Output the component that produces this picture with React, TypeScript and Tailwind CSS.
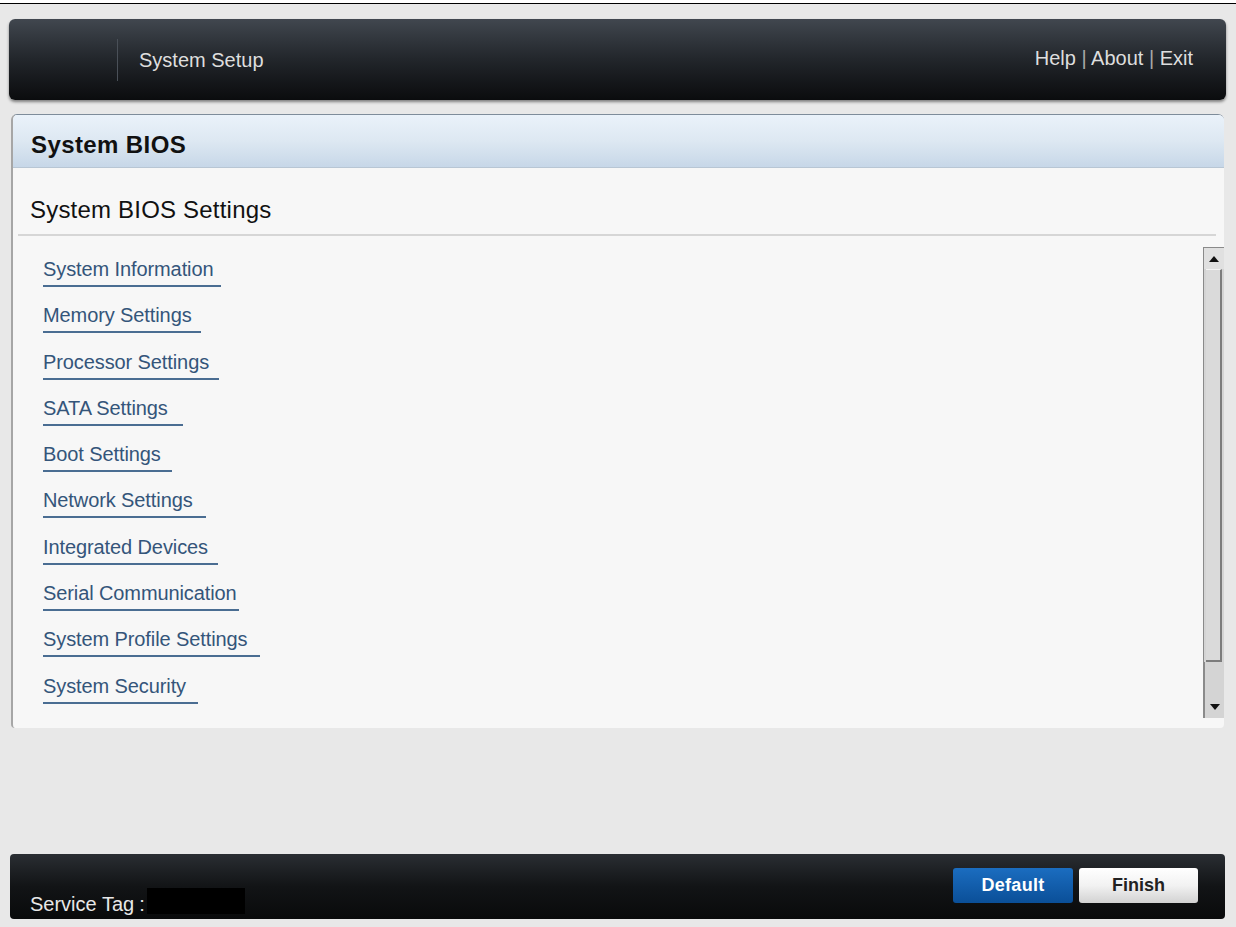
import React from "react";

const links = [
  { label: "System Information", w: "w-[178px]" },
  { label: "Memory Settings", w: "w-[158px]" },
  { label: "Processor Settings", w: "w-[176px]" },
  { label: "SATA Settings", w: "w-[140px]" },
  { label: "Boot Settings", w: "w-[129px]" },
  { label: "Network Settings", w: "w-[163px]" },
  { label: "Integrated Devices", w: "w-[175px]" },
  { label: "Serial Communication", w: "w-[196px]" },
  { label: "System Profile Settings", w: "w-[217px]" },
  { label: "System Security", w: "w-[155px]" },
];

const font = { fontFamily: '"Liberation Sans", Arial, sans-serif' };

const Scrollbar = () => (
  <div className="w-[21px] h-[471px] mt-[11px] mb-[10px] flex flex-col border-l border-t border-[#8a8a8a] bg-[#d4d4d4]">
    <div className="h-[21px] flex items-center justify-center bg-[#e0e0e0]">
      <svg width="10" height="6" viewBox="0 0 10 6">
        <path d="M5 0 L10 6 L0 6 Z" fill="#111" />
      </svg>
    </div>
    <div className="h-[393px] mx-[2px] bg-[#dadada] border-r-2 border-b-2 border-[#7c7c7c] border-t border-t-[#f4f4f4]" />
    <div className="flex-1 flex items-end justify-center pb-[8px] border-l border-[#8a8a8a]">
      <svg width="10" height="6" viewBox="0 0 10 6">
        <path d="M0 0 L10 0 L5 6 Z" fill="#111" />
      </svg>
    </div>
  </div>
);

export default function App() {
  return (
    <div className="w-[1236px] h-[927px] bg-white overflow-hidden" style={font}>
      <div className="mt-[3px] h-[924px] border-t border-black bg-[#e8e8e8] flex flex-col">
        {/* top bar */}
        <div className="mt-[15px] ml-[9px] mr-[10px] h-[81px] rounded-[6px] bg-gradient-to-b from-[#41474f] via-[#22262b] to-[#0b0c0e] shadow-[0_2px_3px_rgba(0,0,0,0.45)] flex items-center">
          <div className="ml-[108px] w-px h-[42px] bg-[#1a1c1f] border-r border-[#4a5058]" />
          <div className="ml-[21px] text-[20px] leading-[24px] text-[#dedede] mt-[1px]">System Setup</div>
          <div className="ml-auto mr-[33px] text-[20px] leading-[24px] text-[#dedede] -mt-[4px]">
            Help <span className="text-[#a8a8a8]">|</span> About <span className="text-[#a8a8a8]">|</span> Exit
          </div>
        </div>

        {/* main panel */}
        <div className="mt-[14px] ml-[11px] mr-[12px] h-[614px] rounded-t-[6px] rounded-b-[4px] bg-[#f7f7f7] border-l-2 border-[#a6a6a6] border-t border-t-[#7e8c9a] flex flex-col overflow-hidden">
          <div className="h-[53px] bg-gradient-to-b from-[#eaf2fa] via-[#dde8f2] to-[#c7d7e8] border-b border-[#b8c6d4] flex items-center pl-[18px] pt-[9px]">
            <span className="text-[24px] leading-[28px] font-bold text-[#111] tracking-[0.4px]">System BIOS</span>
          </div>
          <div className="h-[67px] flex items-center pl-[17px] pt-[19px]">
            <span className="text-[24px] leading-[28px] text-[#111] tracking-[0.2px]">System BIOS Settings</span>
          </div>
          <div className="ml-[5px] mr-[8px] h-[2px] bg-[#d6d6d6]" />
          <div className="flex-1 flex">
            <div className="flex-1 flex flex-col pl-[30px] pt-[21px]">
              {links.map((l) => (
                <div key={l.label} className="h-[46.3px]">
                  <div className={`${l.w} border-b-2 border-[#4a6d92] h-[30px] text-[20px] leading-[24px] text-[#34557a] tracking-[-0.1px]`}>
                    {l.label}
                  </div>
                </div>
              ))}
            </div>
            <Scrollbar />
          </div>
        </div>

        {/* footer */}
        <div className="mt-[126px] ml-[10px] mr-[11px] h-[65px] rounded-[4px] bg-gradient-to-b from-[#2a2e33] via-[#121416] to-[#090a0b] flex items-end pb-[5px]">
          <div className="ml-[20px] text-[20px] leading-[20px] text-[#e8e8e8] flex items-end">
            <span>Service Tag</span>
            <span className="ml-[5px]">:</span>
            <div className="ml-[2px] w-[98px] h-[26px] bg-black" />
          </div>
          <div className="ml-auto mr-[27px] mb-[11px] flex gap-[6px]">
            <button className="w-[120px] h-[35px] rounded-[3px] bg-gradient-to-b from-[#1b6dc0] to-[#0a4f98] text-white font-bold text-[18px] tracking-[0.3px]">
              Default
            </button>
            <button className="w-[119px] h-[35px] rounded-[3px] bg-gradient-to-b from-[#ffffff] via-[#f2f2f2] to-[#d2d2d2] text-[#222] font-bold text-[18px]">
              Finish
            </button>
          </div>
        </div>
      </div>
    </div>
  );
}
